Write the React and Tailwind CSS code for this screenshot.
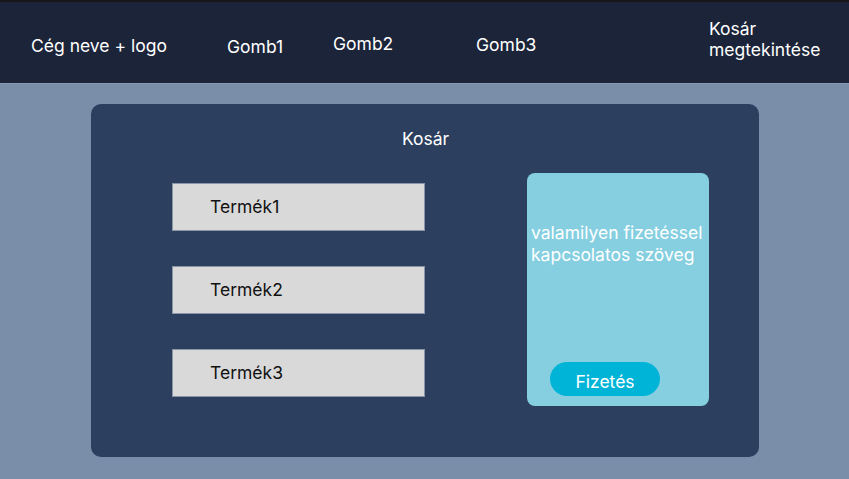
import React from 'react';

const products = ['Termék1', 'Termék2', 'Termék3'];

const App = () => {
  return (
    <div className="w-[849px] h-[479px] overflow-hidden bg-[#7a8ea9] font-['Inter',sans-serif] flex flex-col">
      <header className="h-[84px] bg-[#1c2439] border-t-2 border-[#161718] border-b border-b-[#8497b3] relative text-white text-[17.5px]">
        <span className="absolute left-[31px] top-[31px]">Cég neve + logo</span>
        <span className="absolute left-[227px] top-[32px]">Gomb1</span>
        <span className="absolute left-[333px] top-[29px]">Gomb2</span>
        <span className="absolute left-[476px] top-[30px]">Gomb3</span>
        <span className="absolute left-[709px] top-[16px] leading-[21px]">Kosár<br />megtekintése</span>
      </header>

      <main className="flex-1 pt-[20px] pl-[91px]">
        <div className="w-[668px] h-[353px] bg-[#2c3f5e] rounded-[10px] flex flex-col">
          <h2 className="text-white text-[17.5px] text-center pt-[22px] pl-[1px]">Kosár</h2>
          <div className="flex mt-[10px]">
            <div className="flex flex-col gap-[35px] ml-[81px] mt-[21px]">
              {products.map(p => (
                <div key={p} className="w-[253px] h-[48px] bg-[#d9d9d9] border border-[#8a96a8] flex items-center pl-[37px] text-[17.5px] text-[#111]">
                  {p}
                </div>
              ))}
            </div>
            <div className="ml-[102px] mt-[11px] w-[182px] h-[233px] bg-[#85cfe0] rounded-[8px] flex flex-col relative">
              <p className="text-white text-[17.5px] leading-[22px] pl-[4px] mt-[49px]">valamilyen fizetéssel<br />kapcsolatos szöveg</p>
              <button className="absolute left-[23px] top-[189px] w-[110px] h-[34px] rounded-full bg-[#00b4d8] text-white text-[17.5px] pt-[6px] leading-[22px]">Fizetés</button>
            </div>
          </div>
        </div>
      </main>
    </div>
  );
};

export default App;
